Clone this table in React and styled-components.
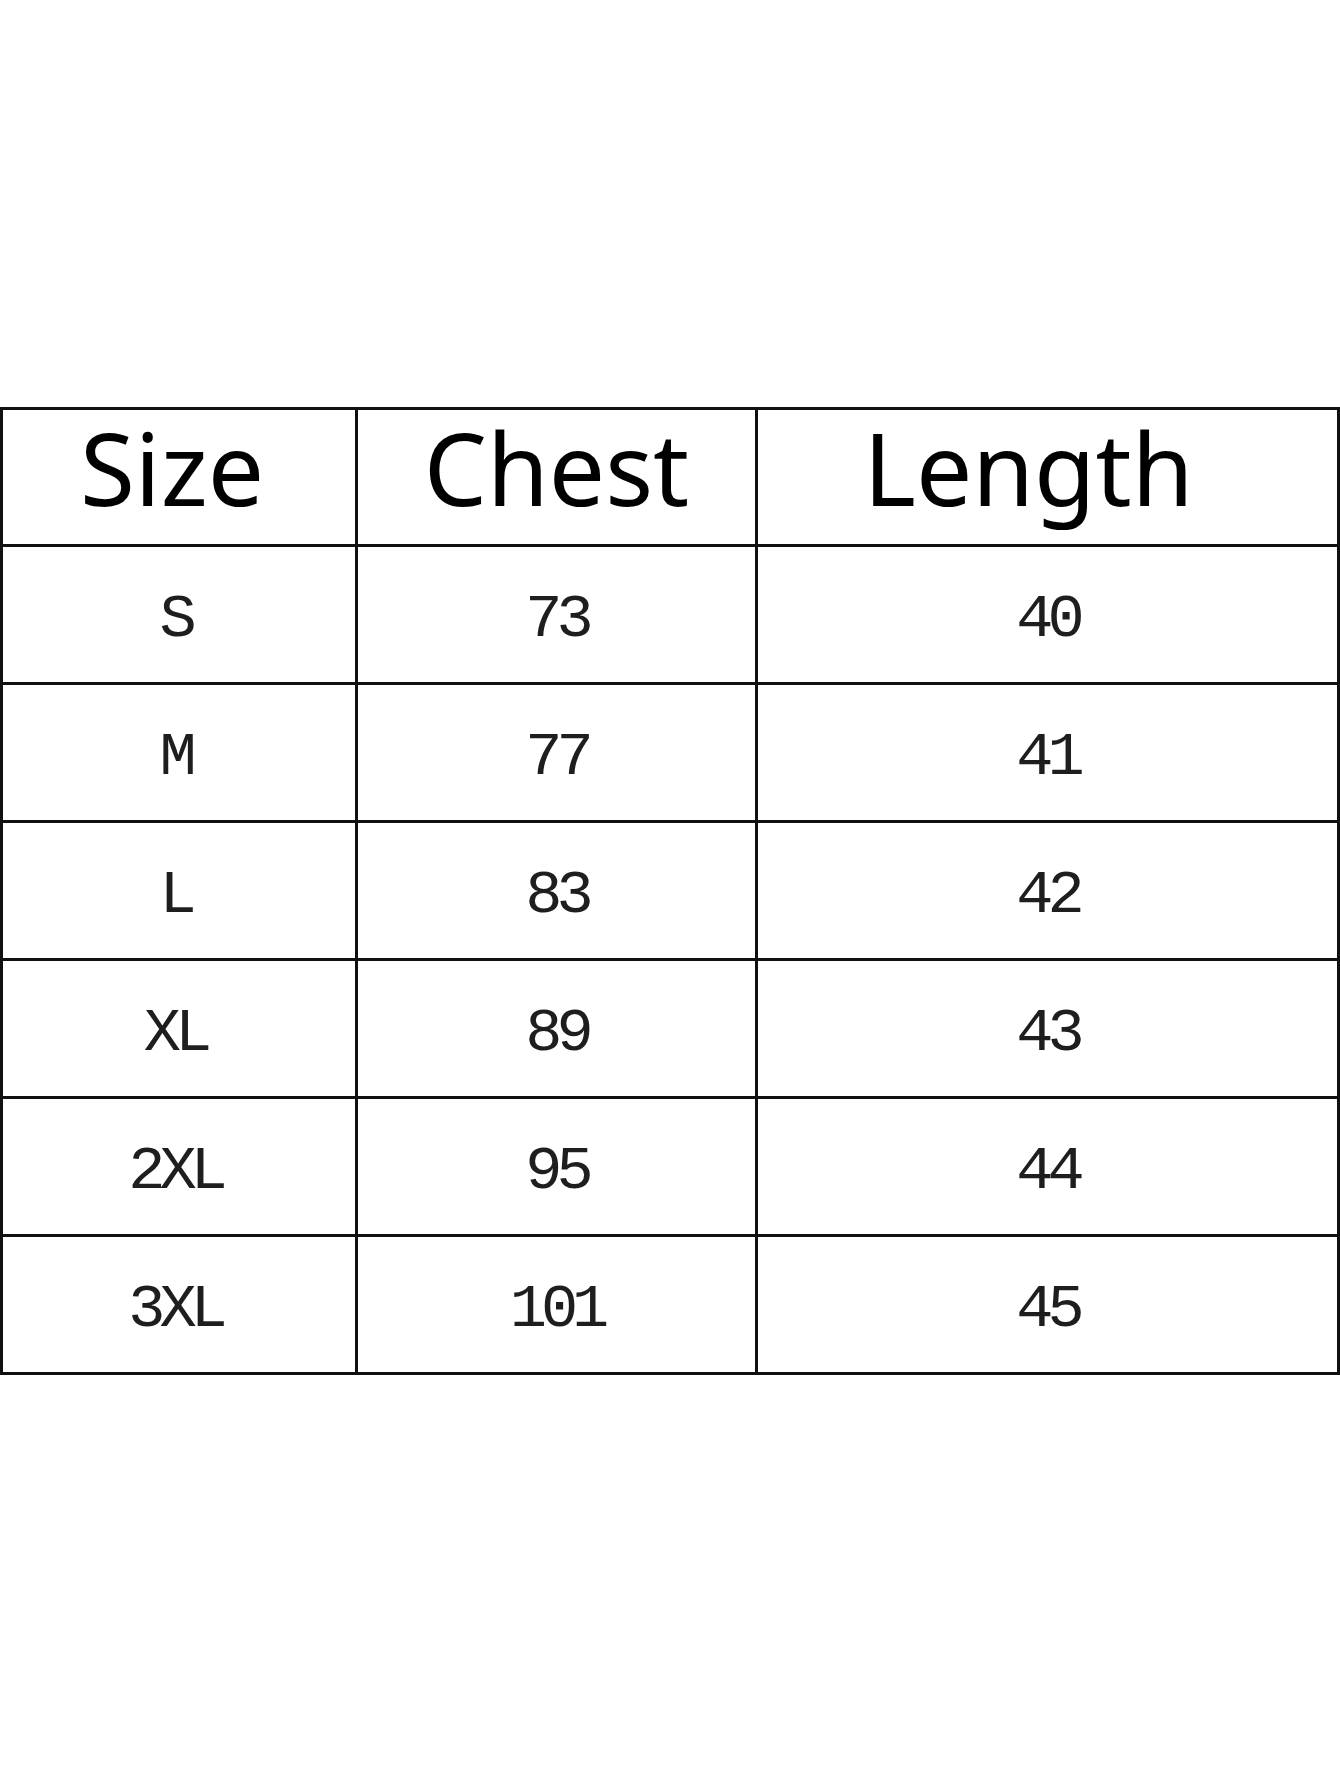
import React from "react";
import styled, { createGlobalStyle } from "styled-components";

const rows = [
  { size: "S", chest: "73", length: "40" },
  { size: "M", chest: "77", length: "41" },
  { size: "L", chest: "83", length: "42" },
  { size: "XL", chest: "89", length: "43" },
  { size: "2XL", chest: "95", length: "44" },
  { size: "3XL", chest: "101", length: "45" },
];

const GlobalStyle = createGlobalStyle`
  html, body {
    margin: 0;
    padding: 0;
    background: #fff;
  }
`;

const Page = styled.div`
  width: 1340px;
  height: 1785px;
  background: #fff;
  padding-top: 407px;
  box-sizing: border-box;
`;

const Table = styled.table`
  width: 1337px;
  border-collapse: collapse;
  table-layout: fixed;
`;

const HeadCell = styled.th`
  height: 114px;
  padding: 0 ${(p) => p.$shiftLeft || 0}px 20px 0;
  border: 3px solid #111;
  font-family: "Noto Sans", "Open Sans", sans-serif;
  font-weight: 400;
  font-size: 100px;
  line-height: 1;
  color: #000;
  text-align: center;
  vertical-align: middle;
`;

const Cell = styled.td`
  height: 125px;
  padding: 10px ${(p) => p.$shiftLeft || 0}px 0 0;
  border: 3px solid #111;
  font-family: "Liberation Mono", "DejaVu Sans Mono", monospace;
  font-size: 62px;
  letter-spacing: -6px;
  line-height: 1;
  color: #1e1e1e;
  text-align: center;
  vertical-align: middle;
`;

export default function App() {
  return (
    <Page>
      <GlobalStyle />
      <Table>
        <colgroup>
          <col style={{ width: 355 }} />
          <col style={{ width: 400 }} />
          <col style={{ width: 582 }} />
        </colgroup>
        <thead>
          <tr>
            <HeadCell $shiftLeft={14}>Size</HeadCell>
            <HeadCell>Chest</HeadCell>
            <HeadCell $shiftLeft={38}>Length</HeadCell>
          </tr>
        </thead>
        <tbody>
          {rows.map((r) => (
            <tr key={r.size}>
              <Cell $shiftLeft={8}>{r.size}</Cell>
              <Cell>{r.chest}</Cell>
              <Cell>{r.length}</Cell>
            </tr>
          ))}
        </tbody>
      </Table>
    </Page>
  );
}
